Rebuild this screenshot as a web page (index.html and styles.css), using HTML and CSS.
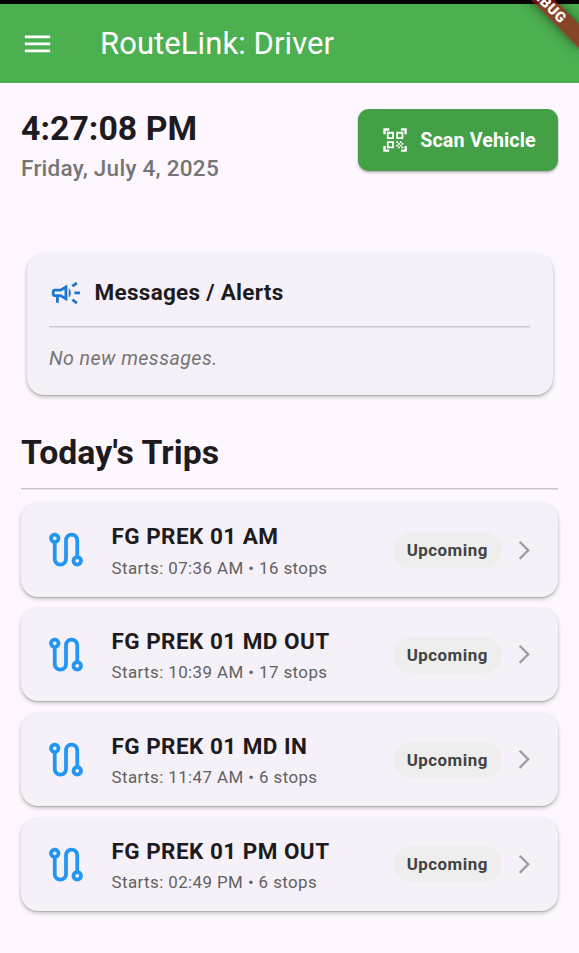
FILE: index.html
```html
<!DOCTYPE html>
<html lang="en">
<head>
<meta charset="utf-8">
<title>RouteLink: Driver</title>
<link rel="stylesheet" href="styles.css">
</head>
<body>
<svg class="defs" aria-hidden="true">
  <symbol id="route" viewBox="0 0 24 24"><path d="M19 15.18V7c0-2.21-1.79-4-4-4s-4 1.79-4 4v10c0 1.1-.9 2-2 2s-2-.9-2-2V8.82C8.16 8.4 9 7.3 9 6c0-1.66-1.34-3-3-3S3 4.34 3 6c0 1.3.84 2.4 2 2.82V17c0 2.21 1.79 4 4 4s4-1.79 4-4V7c0-1.1.9-2 2-2s2 .9 2 2v8.18c-1.16.41-2 1.51-2 2.82 0 1.66 1.34 3 3 3s3-1.34 3-3c0-1.3-.84-2.4-2-2.82zM6 7c-.55 0-1-.45-1-1s.45-1 1-1 1 .45 1 1-.45 1-1 1zm12 12c-.55 0-1-.45-1-1s.45-1 1-1 1 .45 1 1-.45 1-1 1z"/></symbol>
  <symbol id="chevron" viewBox="0 0 24 24"><path d="M6.23 20.23L8 22l10-10L8 2 6.23 3.77 14.46 12z"/></symbol>
</svg>
<div class="screen">
  <div class="status"></div>
  <header class="appbar">
    <svg class="menu" viewBox="0 0 24 24"><path d="M3 18h18v-2H3v2zm0-5h18v-2H3v2zm0-7v2h18V6H3z"/></svg>
    <h1 class="title">RouteLink: Driver</h1>
  </header>
  <div class="ribbon">DEBUG</div>
  <main class="content">
    <section class="top">
      <div class="clock">
        <div class="time">4:27:08 PM</div>
        <div class="date">Friday, July 4, 2025</div>
      </div>
      <button class="scan">
        <svg class="qr" viewBox="0 0 24 24"><path d="M9.5 6.5v3h-3v-3h3M11 5H5v6h6V5zm-1.5 9.5v3h-3v-3h3M11 13H5v6h6v-6zm6.5-6.5v3h-3v-3h3M19 5h-6v6h6V5zm-6 8h1.5v1.5H13V13zm1.5 1.5H16V16h-1.5v-1.5zM16 13h1.5v1.5H16V13zm-3 3h1.5v1.5H13V16zm1.5 1.5H16V19h-1.5v-1.5zM16 16h1.5v1.5H16V16zm1.5-1.5H19V16h-1.5v-1.5zm0 3H19V19h-1.5v-1.5zM22 7h-2V4h-3V2h5v5zm0 15v-5h-2v3h-3v2h5zM2 22h5v-2H4v-3H2v5zM2 2v5h2V4h3V2H2z"/></svg>
        <span class="scan-label">Scan Vehicle</span>
      </button>
    </section>
    <section class="messages">
      <div class="messages-head">
        <svg class="horn" viewBox="0 0 24 24"><path d="M18 11v2h4v-2h-4zm-2 6.610c.96.71 2.210 1.650 3.200 2.390.4-.53.8-1.070 1.200-1.600-.99-.74-2.240-1.680-3.200-2.400-.4.54-.8 1.080-1.200 1.610zM20.400 5.600C20 5.070 19.600 4.530 19.200 4c-.99.74-2.240 1.680-3.200 2.400.4.53.8 1.070 1.200 1.600.96-.72 2.210-1.650 3.200-2.400zM4 9c-1.100 0-2 .9-2 2v2c0 1.100.9 2 2 2h1v4h2v-4h1l5 3V6L8 9H4zm5.030 1.710L11 9.530v4.940l-1.970-1.180-.48-.29H4v-2h4.550l.48-.29zM15.500 12c0-1.330-.58-2.530-1.500-3.350v6.690c.92-.81 1.500-2.010 1.500-3.340z"/></svg>
        <h2 class="messages-title">Messages / Alerts</h2>
      </div>
      <p class="empty">No new messages.</p>
    </section>
    <h2 class="heading">Today's Trips</h2>
    <section class="trips">
      <article class="trip">
        <svg class="route"><use href="#route"/></svg>
        <div class="info"><h3 class="name">FG PREK 01 AM</h3><p class="detail">Starts: 07:36 AM • 16 stops</p></div>
        <span class="chip">Upcoming</span>
        <svg class="chevron"><use href="#chevron"/></svg>
      </article>
      <article class="trip">
        <svg class="route"><use href="#route"/></svg>
        <div class="info"><h3 class="name">FG PREK 01 MD OUT</h3><p class="detail">Starts: 10:39 AM • 17 stops</p></div>
        <span class="chip">Upcoming</span>
        <svg class="chevron"><use href="#chevron"/></svg>
      </article>
      <article class="trip">
        <svg class="route"><use href="#route"/></svg>
        <div class="info"><h3 class="name">FG PREK 01 MD IN</h3><p class="detail">Starts: 11:47 AM • 6 stops</p></div>
        <span class="chip">Upcoming</span>
        <svg class="chevron"><use href="#chevron"/></svg>
      </article>
      <article class="trip">
        <svg class="route"><use href="#route"/></svg>
        <div class="info"><h3 class="name">FG PREK 01 PM OUT</h3><p class="detail">Starts: 02:49 PM • 6 stops</p></div>
        <span class="chip">Upcoming</span>
        <svg class="chevron"><use href="#chevron"/></svg>
      </article>
    </section>
  </main>
</div>
</body>
</html>
```

FILE: styles.css
```css
* { box-sizing: border-box; margin: 0; padding: 0; }
body { background: #fef7ff; color: #1d1b20; font-family: Roboto, sans-serif; }
svg { flex: none; fill: currentColor; display: block; }
.defs { position: absolute; width: 0; height: 0; }
.screen { position: relative; width: 579px; height: 953px; overflow: hidden; }
.status { height: 4px; background: #000; }
.appbar { display: flex; align-items: center; height: 79px; padding-left: 20.4px; background: #4caf50; color: #fff; }
.menu { width: 33.8px; height: 33.8px; transform: translateX(.6px); }
.title { margin-left: 45.8px; font-size: 31px; font-weight: 400; line-height: 40px; letter-spacing: .08px; white-space: nowrap; }
.ribbon {
  position: absolute; left: 489px; top: -6.5px; width: 112.6px; height: 17px;
  transform: rotate(45deg); background: rgba(160, 24, 24, .7); box-shadow: 0 0 12px rgba(0, 0, 0, .5);
  color: #fff; font-size: 14.4px; font-weight: 900; line-height: 17px; letter-spacing: .7px; text-align: center; padding-left: 3px;
}
.content { padding: 26px 21px 0; }
.top { display: flex; justify-content: space-between; align-items: flex-start; height: 144.5px; }
.time { font-size: 33.8px; font-weight: 700; line-height: 40px; letter-spacing: .04px; }
.date { font-size: 22.5px; font-weight: 500; line-height: 32px; margin-top: 3px; letter-spacing: .27px; color: #757575; }
.scan {
  display: flex; align-items: center; width: 200px; height: 62px; padding-left: 22.5px;
  border: 0; border-radius: 11px; background: #43a047; color: #fff; font-family: inherit;
  box-shadow: 0 1px 2px rgba(0, 0, 0, .2), 0 2px 3px rgba(0, 0, 0, .16);
}
.qr { width: 28.2px; height: 28.2px; }
.scan-label { margin-left: 11.6px; font-size: 19.7px; font-weight: 700; letter-spacing: .1px; white-space: nowrap; }
.messages, .trip {
  border-radius: 17px; background: #f6f1f9;
  box-shadow: 0 1px 1px rgba(0, 0, 0, .14), 0 2px 4px rgba(0, 0, 0, .24);
}
.messages { height: 141.5px; margin: 0 5.5px; padding: 22.5px; }
.messages-head { display: flex; align-items: center; height: 51px; padding-bottom: 16px; border-bottom: 1px solid #cac4d0; box-shadow: 0 1px 0 #e2dce6; }
.horn { width: 33.8px; height: 33.8px; color: #1976d2; }
.messages-title { margin-left: 11.8px; font-size: 22.5px; font-weight: 700; letter-spacing: .27px; line-height: 26px; margin-top: -2px; }
.empty { margin-top: 18px; font-size: 19.7px; font-style: italic; line-height: 28px; letter-spacing: .42px; color: #757575; }
.heading { height: 94px; padding-top: 35.5px; border-bottom: 1px solid #cac4d0; box-shadow: 0 1px 0 #e6dfea; font-size: 33.8px; font-weight: 700; line-height: 44px; letter-spacing: .04px; }
.trips { display: grid; gap: 11.4px; margin-top: 14px; }
.trip { display: flex; align-items: center; height: 93.5px; padding: 0 22.5px; }
.route { width: 45px; height: 45px; margin-left: -.6px; transform: translateX(.5px); color: #2196f3; }
.info { flex: 1; margin-left: 23.6px; }
.name { font-size: 22.5px; font-weight: 700; line-height: 32px; letter-spacing: .46px; white-space: nowrap; }
.detail { font-size: 16.9px; line-height: 24px; margin-top: 3.5px; transform: translateY(.4px); letter-spacing: .42px; color: #616161; white-space: nowrap; }
.chip { width: 109px; height: 36px; border-radius: 18px; background: #eee; color: #424242; font-size: 16.9px; font-weight: 700; line-height: 36px; letter-spacing: .48px; text-align: center; padding-left: .5px; }
.chevron { width: 22.5px; height: 22.5px; margin-left: 11.5px; color: #9e9e9e; }
```
